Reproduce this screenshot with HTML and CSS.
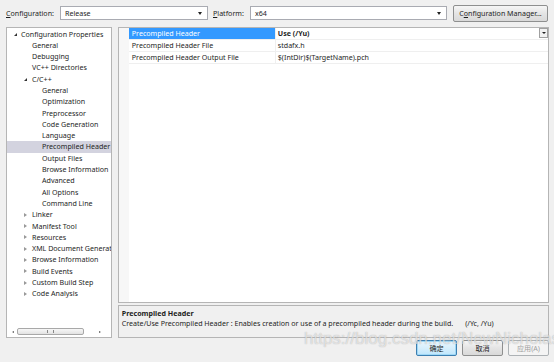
FILE: index.html
```html
<!DOCTYPE html>
<html lang="en">
<head>
    <meta charset="UTF-8">
    <title>Property Pages</title>
    <link rel="stylesheet" href="styles.css">
</head>
<body>
    <div class="dialog">
        <div class="toolbar">
            <span class="label"><u>C</u>onfiguration:</span>
            <div class="combo combo-config"><span>Release</span><span class="arrow"></span></div>
            <span class="label label-platform"><u>P</u>latform:</span>
            <div class="combo combo-platform"><span>x64</span><span class="arrow"></span></div>
            <button class="btn btn-manager">C<u>o</u>nfiguration Manager...</button>
        </div>

        <div class="main">
            <div class="tree-panel">
                <ul class="tree">
                    <li class="lvl0 open">Configuration Properties</li>
                    <li class="lvl1">General</li>
                    <li class="lvl1">Debugging</li>
                    <li class="lvl1">VC++ Directories</li>
                    <li class="lvl1 node open">C/C++</li>
                    <li class="lvl2">General</li>
                    <li class="lvl2">Optimization</li>
                    <li class="lvl2">Preprocessor</li>
                    <li class="lvl2">Code Generation</li>
                    <li class="lvl2">Language</li>
                    <li class="lvl2 selected">Precompiled Header</li>
                    <li class="lvl2">Output Files</li>
                    <li class="lvl2">Browse Information</li>
                    <li class="lvl2">Advanced</li>
                    <li class="lvl2">All Options</li>
                    <li class="lvl2">Command Line</li>
                    <li class="lvl1 node closed">Linker</li>
                    <li class="lvl1 node closed">Manifest Tool</li>
                    <li class="lvl1 node closed">Resources</li>
                    <li class="lvl1 node closed">XML Document Generator</li>
                    <li class="lvl1 node closed">Browse Information</li>
                    <li class="lvl1 node closed">Build Events</li>
                    <li class="lvl1 node closed">Custom Build Step</li>
                    <li class="lvl1 node closed">Code Analysis</li>
                </ul>
                <div class="hscroll">
                    <span class="sarrow left"></span>
                    <div class="track"><div class="thumb"><span class="grip"></span></div></div>
                    <span class="sarrow right"></span>
                </div>
            </div>

            <div class="right">
                <div class="grid-panel">
                    <div class="gutter"></div>
                    <div class="rows">
                        <div class="row active">
                            <div class="name">Precompiled Header</div>
                            <div class="value"><b>Use (/Yu)</b><span class="drop"></span></div>
                        </div>
                        <div class="row">
                            <div class="name">Precompiled Header File</div>
                            <div class="value">stdafx.h</div>
                        </div>
                        <div class="row">
                            <div class="name">Precompiled Header Output File</div>
                            <div class="value">$(IntDir)$(TargetName).pch</div>
                        </div>
                    </div>
                </div>
                <div class="desc-panel">
                    <div class="desc-title">Precompiled Header</div>
                    <div class="desc-text">Create/Use Precompiled Header : Enables creation or use of a precompiled header during the build.<span class="switches">(/Yc, /Yu)</span></div>
                </div>
            </div>
        </div>

        <div class="footer">
            <button class="btn btn-ok">确定</button>
            <button class="btn">取消</button>
            <button class="btn disabled">应用(A)</button>
        </div>

        <div class="watermark">https://blog.csdn.net/NewNicholas</div>
    </div>
</body>
</html>
```

FILE: styles.css
```css
body {
    margin: 0;
    background: #f0f0f0;
    font-family: "Noto Sans", "Noto Sans CJK SC", sans-serif;
    font-size: 7.1px;
    color: #1e1e1e;
}

.dialog {
    position: relative;
    width: 554px;
    height: 362px;
    overflow: hidden;
}

/* top bar */
.toolbar {
    display: flex;
    align-items: center;
    height: 16px;
    padding: 5px 6px 0 6px;
}
.label {
    width: 54px;
}
.label-platform {
    width: 37px;
    margin-left: 5px;
}
.combo {
    display: flex;
    align-items: center;
    justify-content: space-between;
    height: 14px;
    box-sizing: border-box;
    border: 1px solid #a9abb2;
    background: #fff;
    padding: 0 5px 0 4px;
}
.combo-config { width: 148px; }
.combo-platform { width: 197px; }
.arrow {
    width: 0;
    height: 0;
    border-left: 2.5px solid transparent;
    border-right: 2.5px solid transparent;
    border-top: 3px solid #222;
}
.btn {
    font-family: inherit;
    font-size: 7.1px;
    color: #1e1e1e;
    height: 17px;
    border: 1px solid #8e8f8f;
    border-radius: 2px;
    background: linear-gradient(#f6f6f6, #e4e4e4 50%, #d9d9d9);
    padding: 0;
}
.btn-manager {
    width: 95px;
    margin-left: 6px;
}

/* main area */
.main {
    display: flex;
    gap: 6px;
    height: 311px;
    padding: 6px 5px 0 6px;
}
.tree-panel {
    width: 106px;
    box-sizing: border-box;
    border: 1px solid #b5b5b5;
    background: #fff;
    display: flex;
    flex-direction: column;
    overflow: hidden;
}
.tree {
    list-style: none;
    margin: 0;
    padding: 0;
    flex: 1;
    padding-top: 0.5px;
}
.tree li {
    height: 11.3px;
    line-height: 11.3px;
    white-space: nowrap;
    position: relative;
}
.lvl0 { padding-left: 14px; }
.lvl1 { padding-left: 25px; }
.lvl2 { padding-left: 35px; }
.selected { background: #d3d3df; }
.open::before,
.closed::before {
    content: "";
    position: absolute;
    top: 4px;
    width: 0;
    height: 0;
}
.lvl0.open::before { left: 7px; }
.lvl1.open::before,
.lvl1.closed::before { left: 17px; }
.open::before {
    border-left: 3px solid transparent;
    border-bottom: 3px solid #333;
}
.closed::before {
    top: 3.5px;
    border-top: 2px solid transparent;
    border-bottom: 2px solid transparent;
    border-left: 3px solid #999;
}

.hscroll {
    display: flex;
    align-items: center;
    height: 9px;
    margin: 0 0 1px 0;
    padding: 0 2px;
}
.sarrow {
    width: 0;
    height: 0;
    border-top: 1.5px solid transparent;
    border-bottom: 1.5px solid transparent;
    margin: 0 3px;
}
.sarrow.left { border-right: 2px solid #555; }
.sarrow.right { border-left: 2px solid #555; }
.track {
    flex: 1;
    margin: 0 12px 0 0;
}
.thumb {
    width: 67px;
    height: 7px;
    box-sizing: border-box;
    border: 1px solid #a8a8a8;
    border-radius: 2px;
    background: linear-gradient(#f7f7f7, #e2e2e2);
    display: flex;
    justify-content: center;
    align-items: center;
}
.grip {
    width: 5px;
    height: 3px;
    border-left: 1px solid #888;
    border-right: 1px solid #888;
}

/* right side */
.right {
    display: flex;
    flex-direction: column;
    gap: 2px;
    width: 432px;
}
.grid-panel {
    display: flex;
    height: 276px;
    box-sizing: border-box;
    border: 1px solid #b5b5b5;
    background: #fff;
}
.gutter {
    width: 10px;
    background: #f7f7f7;
}
.rows {
    flex: 1;
}
.row {
    display: flex;
    height: 11px;
    line-height: 10px;
    border-bottom: 1px solid #efefef;
}
.name {
    width: 147px;
    box-sizing: border-box;
    padding-left: 3px;
    border-right: 1px solid #efefef;
}
.value {
    flex: 1;
    padding-left: 2px;
    display: flex;
    justify-content: space-between;
}
.row.active .name {
    background: #3399ff;
    color: #fff;
}
.drop {
    width: 9px;
    height: 10px;
    box-sizing: border-box;
    border: 1px solid #a0a0a0;
    background: #f2f2f2;
    position: relative;
}
.drop::after {
    content: "";
    position: absolute;
    left: 2px;
    top: 3px;
    border-left: 2px solid transparent;
    border-right: 2px solid transparent;
    border-top: 2.5px solid #222;
}

.desc-panel {
    height: 33px;
    box-sizing: border-box;
    border: 1px solid #b5b5b5;
    background: #f0f0f0;
    padding: 2px 3px;
}
.desc-title {
    font-weight: bold;
    line-height: 10px;
}
.desc-text {
    line-height: 11px;
}
.switches {
    margin-left: 12px;
}

/* footer */
.footer {
    display: flex;
    justify-content: flex-end;
    gap: 5px;
    padding: 2px 5px 0 0;
}
.footer .btn {
    width: 41px;
    height: 16px;
}
.btn-ok {
    border-color: #3c7fb1;
    background: linear-gradient(#eaf6fd, #d7effc 50%, #bee6fd);
    box-shadow: inset 0 0 0 1px #9fd8f6;
}
.btn.disabled {
    color: #a0a0a0;
    border-color: #adb2b5;
    background: #f4f4f4;
}

.watermark {
    position: absolute;
    left: 304px;
    top: 329px;
    font-family: "Liberation Sans", sans-serif;
    font-size: 17px;
    color: rgba(255, 255, 255, 0.6);
    text-shadow: 0 0 1px rgba(110, 110, 110, 0.55);
    white-space: nowrap;
    pointer-events: none;
}
```
